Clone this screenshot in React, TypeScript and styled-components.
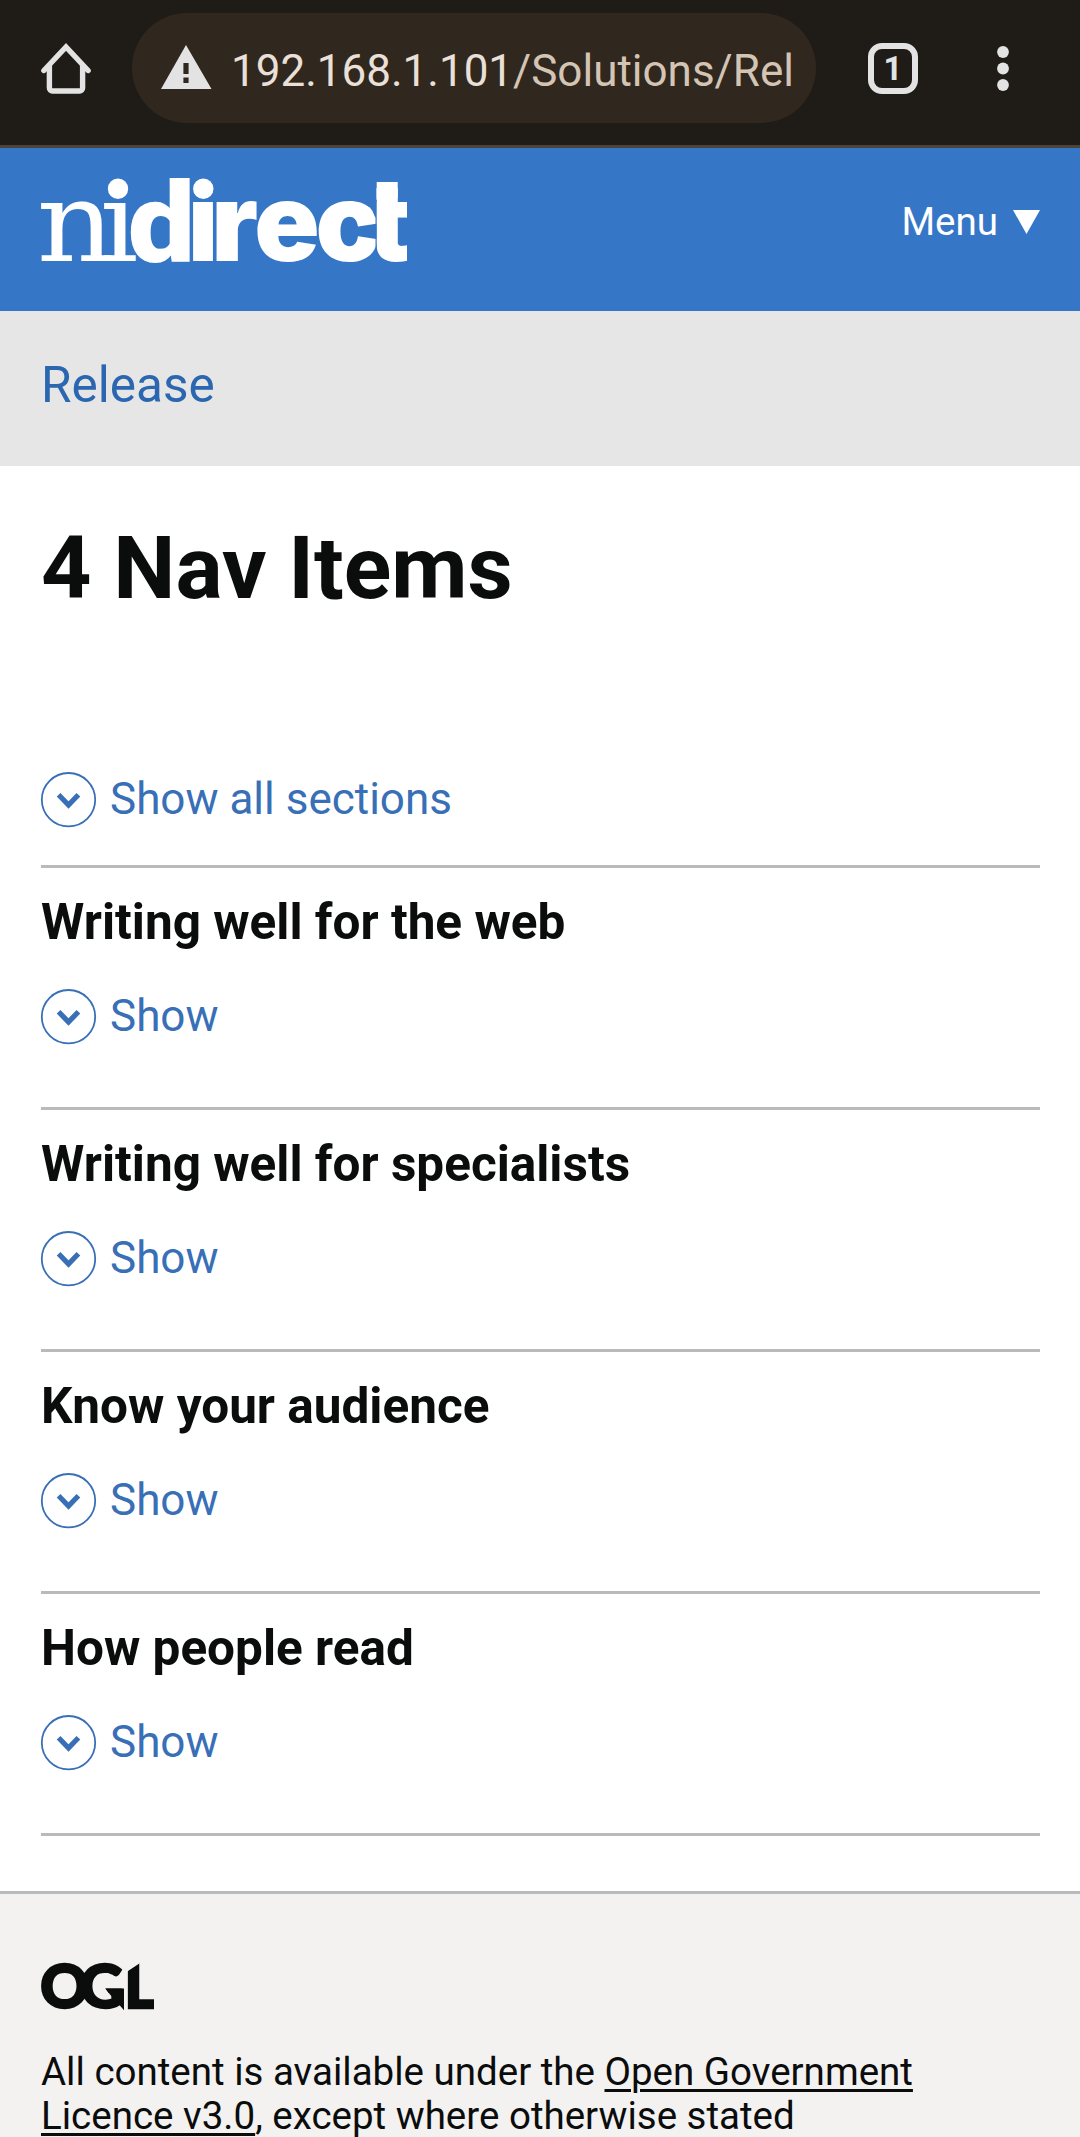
import React from "react";
import styled, { createGlobalStyle } from "styled-components";

const GlobalStyle = createGlobalStyle`
  *, *::before, *::after { box-sizing: border-box; }
  body {
    margin: 0;
    background: #fff;
    font-family: Roboto, "Noto Sans", sans-serif;
    color: #0b0c0c;
  }
  h1, h2, p { margin: 0; }
  svg { display: block; flex: none; overflow: visible; }
`;

const Page = styled.div`
  display: flex;
  flex-direction: column;
  width: 1080px;
  height: 2137px;
  overflow: hidden;
  background: #fff;
`;

const BrowserBar = styled.div`
  display: flex;
  flex: none;
  align-items: flex-start;
  height: 148px;
  padding: 13px 70px 0 41px;
  background: #1f1b16;
  border-bottom: 3px solid #4d4339;
`;

const HomeIcon = styled.svg`
  margin-top: 29px;
`;

const AddressPill = styled.div`
  display: flex;
  align-items: center;
  flex: none;
  width: 684px;
  height: 110px;
  margin-left: 41px;
  padding-left: 28px;
  border-radius: 55px;
  background: #30271f;
`;

const AddressText = styled.span`
  margin-left: 19px;
  padding-top: 5px;
  font-size: 44px;
  line-height: 60px;
  white-space: nowrap;
  color: #d3c4b4;
`;

const Host = styled.span`
  color: #ebe0d7;
`;

const TabCount = styled.div`
  display: flex;
  align-items: center;
  justify-content: center;
  flex: none;
  width: 50px;
  height: 51px;
  margin: 30px 0 0 52px;
  border: 6px solid #e3e3e3;
  border-radius: 14px;
  font-size: 33px;
  font-weight: 700;
  line-height: 39px;
  color: #e3e3e3;
`;

const MenuDots = styled.svg`
  margin: 32px 0 0 79px;
`;

const SiteHeader = styled.header`
  display: flex;
  flex: none;
  align-items: flex-start;
  justify-content: space-between;
  height: 163px;
  padding: 30px 40px 0 41px;
  background: #3576c7;
`;

const MenuButton = styled.div`
  display: flex;
  align-items: center;
  gap: 15px;
  padding-top: 21px;
  font-size: 38.5px;
  line-height: 46px;
  color: #fff;
`;

const Breadcrumb = styled.nav`
  flex: none;
  height: 155px;
  padding: 44px 41px 0;
  background: #e6e6e6;
  font-size: 49.5px;
  line-height: 60px;
  color: #2b67b0;
`;

const Main = styled.main`
  flex: none;
  height: 1425px;
  padding: 52px 40px 0 41px;
`;

const Title = styled.h1`
  height: 254px;
  font-size: 88px;
  font-weight: 700;
  line-height: 100px;
`;

const Toggle = styled.div`
  display: flex;
  align-items: flex-start;
  gap: 13px;
  height: 56px;
  font-size: 44px;
  line-height: 54px;
  color: #386fb6;
`;

const ShowAll = styled.div`
  height: 93px;
`;

const Section = styled.section`
  height: 242.1px;
  border-top: 3px solid #b8babb;
  padding-top: 24px;
`;

const SectionTitle = styled.h2`
  margin-bottom: 36.6px;
  font-size: 49.5px;
  font-weight: 700;
  line-height: 60px;
`;

const EndRule = styled.div`
  border-top: 3px solid #b8babb;
`;

const Footer = styled.footer`
  flex: 1;
  padding: 69px 41px 0;
  border-top: 3px solid #b8babb;
  background: #f3f2f1;
`;

const Licence = styled.p`
  margin-top: 39px;
  font-size: 38.5px;
  line-height: 44px;
  white-space: nowrap;
`;

const LicenceLink = styled.span`
  text-decoration: underline;
  text-decoration-thickness: 3px;
  text-underline-offset: 4px;
`;

const LogoText = styled.text<{ $family: string; $size: number; $weight: number }>`
  font-family: ${(p) => p.$family}, sans-serif;
  font-size: ${(p) => p.$size}px;
  font-weight: ${(p) => p.$weight};
`;

const sections = [
  "Writing well for the web",
  "Writing well for specialists",
  "Know your audience",
  "How people read",
];

function SiteLogo() {
  return (
    <svg width="366" height="86" viewBox="0 0 366 86" fill="#fff">
      <LogoText $family="DejaVu Serif" $weight={400} $size={112} transform="scale(1.08 1)" x="-3.9 54.3" y="83">
        ni
      </LogoText>
      <LogoText $family="Roboto" $weight={900} $size={111} transform="scale(1.08 1)" x="80.3 134.8" y="83">
        di
      </LogoText>
      <LogoText $family="Inter" $weight={900} $size={108} x="170.2 213.3 274.6 327" y="83">
        rect
      </LogoText>
      {/* Trim the crossbar of the t, then carry its stem up */}
      <path
        fill="#3576c7"
        d="M325 22H335.7V83H334.5V39.7L333.6 38 331.5 33 328.8 29.5 325 26.3ZM366 20H380V86H366Z"
      />
      <rect x="335.7" y="4" width="21" height="16" />
      {/* Round dots over both letters i */}
      <path fill="#3576c7" d="M64 -4H92V22.5H64ZM149.5 -4H175V22.5H149.5Z" />
      <circle cx="77" cy="10.7" r="10.2" />
      <circle cx="162.3" cy="10.7" r="10.2" />
    </svg>
  );
}

function LicenceLogo() {
  return (
    <svg width="113" height="48" viewBox="0 0 113 48" fill="#0b0c0c">
      <LogoText
        $family="Lato"
        $weight={900}
        $size={60}
        x="-0.7 39.1 83.4"
        y="45.3"
        stroke="#0b0c0c"
        strokeWidth="2.4"
      >
        OGL
      </LogoText>
      <path
        fill="#f3f2f1"
        d="M60 19.5H85V25.5H64.4L69.5 32.5H60ZM85 -2H98.7V.3L85.5 9ZM113 30H120V50H113Z"
      />
      <path d="M64.4 25.5H83V47.3L77.5 41 69 31.5Z" />
    </svg>
  );
}

function ToggleRow({ label }: { label: string }) {
  return (
    <Toggle>
      <svg width="56" height="56" viewBox="0 0 56 56" fill="none" stroke="#386fb6">
        <circle cx="27.5" cy="27.7" r="26.7" strokeWidth="1.8" />
        <path d="M17.6 22.8 27.5 33 37.4 22.8" strokeWidth="5.2" />
      </svg>
      {label}
    </Toggle>
  );
}

export default function App() {
  return (
    <Page>
      <GlobalStyle />
      <BrowserBar>
        <HomeIcon width="50" height="53" viewBox="0 0 50 53" fill="none" stroke="#e3e3e3" strokeWidth="5.4">
          <path d="M2.9 28.5 25 5 47.1 28.5" strokeLinecap="round" />
          <path d="M8.4 22V46a3 3 0 0 0 3 3H38.6a3 3 0 0 0 3-3V22" />
        </HomeIcon>
        <AddressPill>
          <svg width="52" height="46" viewBox="0 0 52 46">
            <path fill="#e3e3e3" fillRule="evenodd" d="M26 0 51.5 44H1ZM23.4 18V29H28.6V18ZM23.4 32.5V38H28.6V32.5Z" />
          </svg>
          <AddressText>
            <Host>192.168.1.101</Host>/Solutions/Rel
          </AddressText>
        </AddressPill>
        <TabCount>1</TabCount>
        <MenuDots width="12" height="48" viewBox="0 0 12 48" fill="#e3e3e3">
          <circle cx="6" cy="7" r="5.9" />
          <circle cx="6" cy="23.5" r="5.9" />
          <circle cx="6" cy="40" r="5.9" />
        </MenuDots>
      </BrowserBar>

      <SiteHeader>
        <SiteLogo />
        <MenuButton>
          Menu
          <svg width="27" height="24" viewBox="0 0 27 24">
            <path fill="#fff" d="M0 0H27L13.5 24Z" />
          </svg>
        </MenuButton>
      </SiteHeader>

      <Breadcrumb>Release</Breadcrumb>

      <Main>
        <Title>4 Nav Items</Title>
        <ShowAll>
          <ToggleRow label="Show all sections" />
        </ShowAll>
        {sections.map((title) => (
          <Section key={title}>
            <SectionTitle>{title}</SectionTitle>
            <ToggleRow label="Show" />
          </Section>
        ))}
        <EndRule />
      </Main>

      <Footer>
        <LicenceLogo />
        <Licence>
          All content is available under the <LicenceLink>Open Government</LicenceLink>
          <br />
          <LicenceLink>Licence v3.0</LicenceLink>, except where otherwise stated
        </Licence>
      </Footer>
    </Page>
  );
}
